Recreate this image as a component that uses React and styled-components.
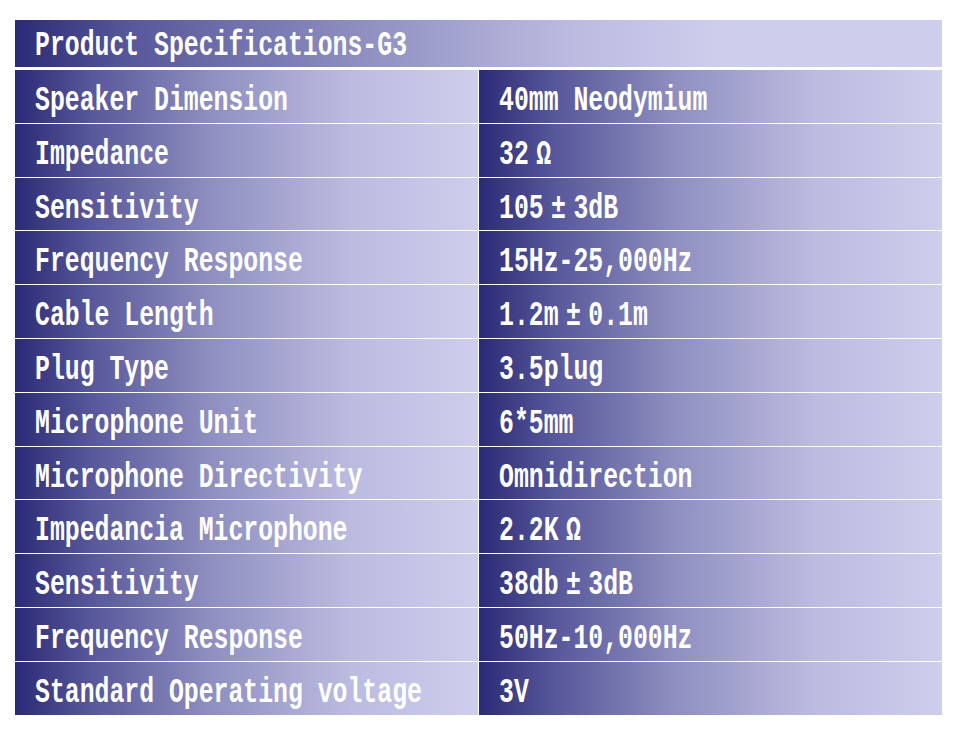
import React from 'react';
import styled, { createGlobalStyle } from 'styled-components';

const GlobalStyle = createGlobalStyle`
  body {
    margin: 0;
    background: #ffffff;
  }
`;

const specs = [
  ['Speaker Dimension', '40mm Neodymium'],
  ['Impedance', '32Ω'],
  ['Sensitivity', '105±3dB'],
  ['Frequency Response', '15Hz-25,000Hz'],
  ['Cable Length', '1.2m±0.1m'],
  ['Plug Type', '3.5plug'],
  ['Microphone Unit', '6*5mm'],
  ['Microphone Directivity', 'Omnidirection'],
  ['Impedancia Microphone', '2.2KΩ'],
  ['Sensitivity', '38db±3dB'],
  ['Frequency Response', '50Hz-10,000Hz'],
  ['Standard Operating voltage', '3V'],
];

const Page = styled.div`
  padding: 20px 15px;
  width: 927px;
`;

const Header = styled.div`
  height: 47px;
  display: flex;
  align-items: center;
  padding-left: 20px;
  padding-top: 4px;
  margin-bottom: 3px;
  box-sizing: border-box;
  background: linear-gradient(
    to right,
    #2b2a75 0%,
    #56569a 12%,
    #8c8cbf 36%,
    #bbbbe0 60%,
    #cdcdec 76%,
    #cdcdec 100%
  );
`;

const Grid = styled.div`
  display: grid;
  grid-template-columns: 463px 463px;
  grid-auto-rows: 52.8px;
  gap: 1px;
`;

const Cell = styled.div`
  display: flex;
  align-items: center;
  padding-left: 20px;
  padding-top: 8px;
  box-sizing: border-box;
  background: linear-gradient(
    to right,
    #2b2a75 0%,
    #56569a 16%,
    #8e8ec0 42%,
    #bbbbe0 72%,
    #cdcdec 100%
  );
`;

const Label = styled.span`
  display: inline-block;
  font-family: 'Liberation Mono', 'Courier New', monospace;
  font-weight: bold;
  font-size: 24.8px;
  line-height: 1;
  color: #ffffff;
  white-space: nowrap;
  transform: scaleY(1.38);
  transform-origin: left center;
`;

// full-width symbols (± and Ω) take two character cells in the original
const Wide = styled.span`
  display: inline-block;
  width: 2ch;
  text-align: center;
`;

const renderText = text =>
  text.split(/([±Ω])/).map((part, i) =>
    part === '±' || part === 'Ω' ? <Wide key={i}>{part}</Wide> : part
  );

const App = () => (
  <>
    <GlobalStyle />
    <Page>
      <Header>
        <Label>Product Specifications-G3</Label>
      </Header>
      <Grid>
        {specs.map(([name, value], i) => (
          <React.Fragment key={i}>
            <Cell>
              <Label>{name}</Label>
            </Cell>
            <Cell>
              <Label>{renderText(value)}</Label>
            </Cell>
          </React.Fragment>
        ))}
      </Grid>
    </Page>
  </>
);

export default App;
